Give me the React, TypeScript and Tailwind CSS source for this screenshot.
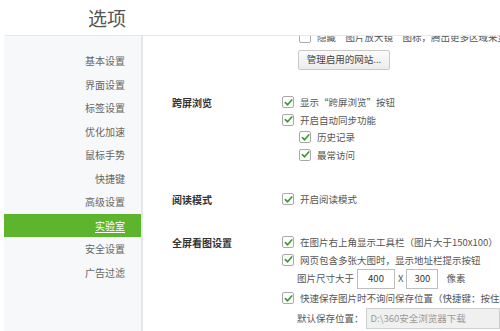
import React from "react";

const font = { fontFamily: '"Noto Sans CJK SC", "Noto Sans", sans-serif' };

function Check({ checked = true }: { checked?: boolean }) {
  return (
    <span className="w-[12px] h-[12px] shrink-0 border border-[#a9a9a9] rounded-[2px] bg-white flex items-center justify-center">
      {checked && (
        <svg width="9" height="9" viewBox="0 0 10 10">
          <path d="M1.5 5.2 L4 7.6 L8.6 2.2" fill="none" stroke="#3a9a2b" strokeWidth="1.8" strokeLinecap="round" strokeLinejoin="round" />
        </svg>
      )}
    </span>
  );
}

function Row({ text, indent = false, checked = true }: { text: string; indent?: boolean; checked?: boolean }) {
  return (
    <div className={`h-[17.5px] flex items-center gap-[6px] whitespace-nowrap ${indent ? "pl-[17px]" : ""}`}>
      <Check checked={checked} />
      <span>{text}</span>
    </div>
  );
}

function Section({ label, children, mt }: { label?: string; children: React.ReactNode; mt: string }) {
  return (
    <div className={`flex ${mt}`}>
      <div className="w-[110px] shrink-0 h-[17.5px] flex items-center font-bold text-[10px] text-[#333]">{label}</div>
      <div className="flex flex-col min-w-0">{children}</div>
    </div>
  );
}

const items = ["基本设置", "界面设置", "标签设置", "优化加速", "鼠标手势", "快捷键", "高级设置", "实验室", "安全设置", "广告过滤"];

export default function App() {
  return (
    <div className="w-[500px] h-[331px] bg-white flex flex-col overflow-hidden text-[9.5px]" style={font}>
      <div className="h-[36px] shrink-0 border-b border-[#e9e9e9] ml-[4px] flex items-center">
        <div className="w-[137px] pr-[15px] text-right text-[19px] text-[#555] leading-none">选项</div>
      </div>
      <div className="flex flex-1 min-h-0">
        <div className="ml-[4px] w-[139px] shrink-0 bg-[#f7f8fa] border-r-2 border-[#e5e6e8] pt-[13px] flex flex-col">
          {items.map((it) => (
            <div
              key={it}
              className={`h-[23.5px] flex items-center justify-end pr-[16px] text-[10px] ${
                it === "实验室" ? "bg-[#5db42d] text-white underline underline-offset-2" : "text-[#666]"
              }`}
            >
              {it}
            </div>
          ))}
        </div>
        <div className="flex-1 min-w-0 overflow-hidden text-[#555]">
          <div className="-mt-[8px] pl-[29px] flex flex-col">
            <Section mt="mt-0">
              <Row indent checked={false} text="隐藏“图片放大镜”图标，腾出更多区域来显示网页" />
              <div className="pl-[16px] mt-[4px]">
                <div className="w-[92px] h-[20px] border border-[#c9c9c9] rounded-[2px] bg-gradient-to-b from-[#fbfbfb] to-[#ececec] flex items-center justify-center text-[#444]">
                  管理启用的网站...
                </div>
              </div>
            </Section>
            <Section label="跨屏浏览" mt="mt-[24px]">
              <Row text="显示“跨屏浏览”按钮" />
              <Row text="开启自动同步功能" />
              <Row indent text="历史记录" />
              <Row indent text="最常访问" />
            </Section>
            <Section label="阅读模式" mt="mt-[27px]">
              <Row text="开启阅读模式" />
            </Section>
            <Section label="全屏看图设置" mt="mt-[25.5px]">
              <Row text="在图片右上角显示工具栏（图片大于150x100）" />
              <Row text="网页包含多张大图时，显示地址栏提示按钮" />
              <div className="h-[20px] flex items-center pl-[15px] whitespace-nowrap">
                <span>图片尺寸大于</span>
                <div className="ml-[3px] w-[38px] h-[20px] border border-[#bdbdbd] bg-white flex items-center justify-center text-[#333]">400</div>
                <span className="mx-[3px]">X</span>
                <div className="w-[32px] h-[20px] border border-[#bdbdbd] bg-white flex items-center justify-center text-[#333]">300</div>
                <span className="ml-[8px]">像素</span>
              </div>
              <div className="mt-[1px]">
                <Row text="快速保存图片时不询问保存位置（快捷键：按住Alt键单击图片）" />
              </div>
              <div className="h-[21px] flex items-center pl-[15px] whitespace-nowrap mt-[1px]">
                <span>默认保存位置：</span>
                <div className="ml-[2px] w-[160px] h-[21px] border border-[#cfcfcf] bg-[#f0f0f0] flex items-center pl-[4px] text-[#999]">
                  D:\360安全浏览器下载
                </div>
              </div>
            </Section>
          </div>
        </div>
      </div>
    </div>
  );
}
